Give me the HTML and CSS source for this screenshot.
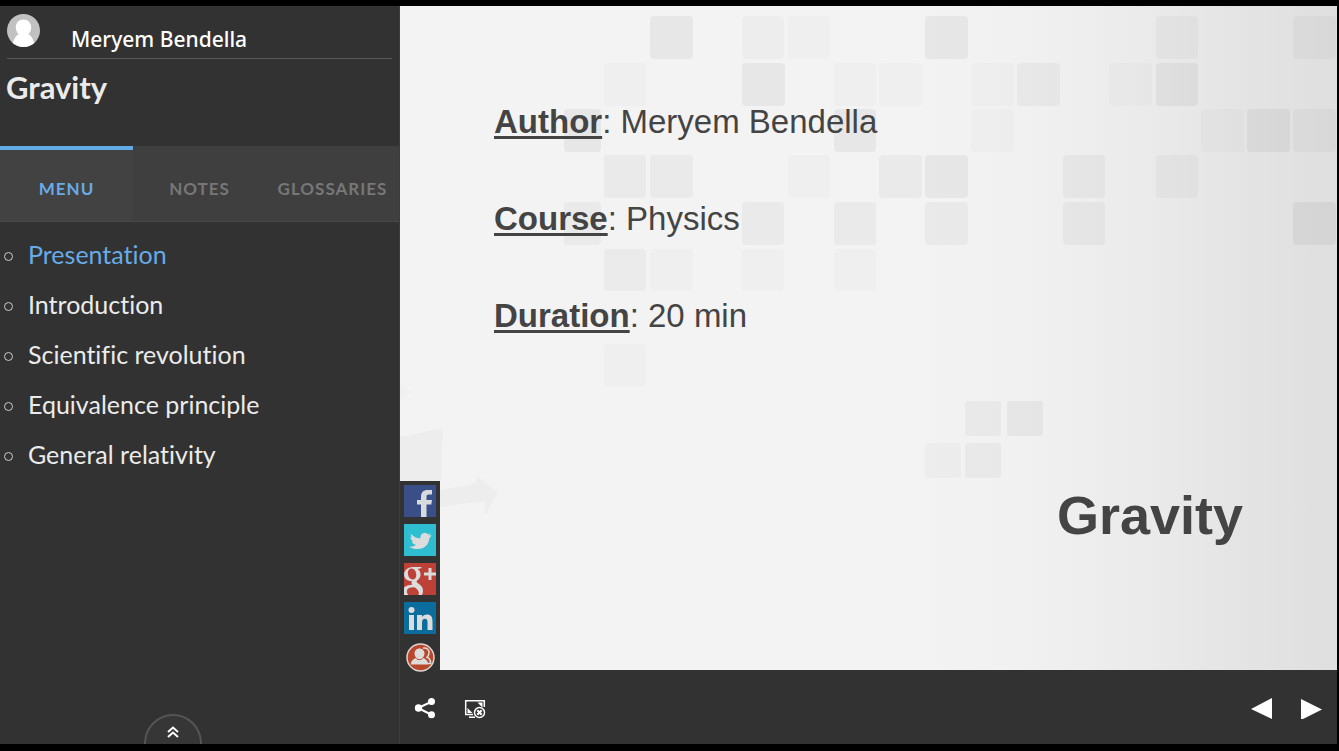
FILE: index.html
```html
<!DOCTYPE html>
<html lang="en">
<head>
<meta charset="utf-8">
<title>Gravity</title>
<link rel="stylesheet" href="styles.css">
</head>
<body>
<div class="player">
  <aside class="sidebar">
    <header class="profile">
      <svg class="avatar" viewBox="0 0 33 33" aria-hidden="true">
        <defs><clipPath id="round"><circle cx="16.500" cy="16.500" r="16.500"/></clipPath></defs>
        <g clip-path="url(#round)">
          <rect width="33" height="33" fill="#c1c1c1"/>
          <path fill="#fff" d="M16.500 5.500c-4.600 0-7.700 3.300-7.700 7.900 0 2.800 1.200 5.200 3 6.700-3 1.500-6 6-6.300 13.400h22c-.3-7.400-3.300-11.900-6.300-13.400 1.800-1.500 3-3.900 3-6.700 0-4.600-3.100-7.900-7.700-7.900z"/>
        </g>
      </svg>
      <span class="profile-name">Meryem Bendella</span>
    </header>
    <h1 class="course-title">Gravity</h1>
    <nav class="tabs">
      <button class="tab tab-active" type="button">MENU</button>
      <button class="tab" type="button">NOTES</button>
      <button class="tab" type="button">GLOSSARIES</button>
    </nav>
    <ul class="outline">
      <li><a class="current" href="#presentation">Presentation</a></li>
      <li><a href="#introduction">Introduction</a></li>
      <li><a href="#revolution">Scientific revolution</a></li>
      <li><a href="#equivalence">Equivalence principle</a></li>
      <li><a href="#relativity">General relativity</a></li>
    </ul>
    <button class="drawer" type="button" aria-label="Expand">
      <svg width="12" height="12" viewBox="0 0 12 12" fill="none" stroke="#fff" stroke-width="2"><path d="M1 6l5-4.500L11 6M1 11l5-4.500L11 11"/></svg>
    </button>
  </aside>

  <main class="stage">
    <section class="slide">
      <svg class="backdrop" viewBox="0 0 937 664" preserveAspectRatio="xMaxYMin slice" aria-hidden="true">
        <g fill="#000">
          <g opacity=".045">
            <rect x="250" y="10" width="43" height="43" rx="4"/>
            <rect x="342" y="57" width="43" height="43" rx="4"/>
            <rect x="525" y="10" width="43" height="43" rx="4"/>
            <rect x="756" y="57" width="42" height="43" rx="4"/>
            <rect x="847" y="103" width="43" height="43" rx="4"/>
            <rect x="893" y="196" width="43" height="43" rx="4"/>
            <rect x="525" y="149" width="43" height="43" rx="4"/>
            <rect x="164" y="103" width="37" height="43" rx="4"/>
            <rect x="434" y="103" width="42" height="43" rx="4"/>
            <rect x="607" y="395" width="36" height="35" rx="3"/>
          </g>
          <g opacity=".032">
            <rect x="204" y="149" width="42" height="43" rx="4"/>
            <rect x="250" y="149" width="43" height="43" rx="4"/>
            <rect x="479" y="149" width="43" height="43" rx="4"/>
            <rect x="617" y="57" width="43" height="43" rx="4"/>
            <rect x="663" y="149" width="42" height="43" rx="4"/>
            <rect x="663" y="196" width="42" height="43" rx="4"/>
            <rect x="204" y="243" width="42" height="42" rx="4"/>
            <rect x="342" y="196" width="42" height="43" rx="4"/>
            <rect x="434" y="196" width="42" height="43" rx="4"/>
            <rect x="525" y="196" width="43" height="43" rx="4"/>
            <rect x="164" y="196" width="37" height="43" rx="4"/>
            <rect x="565" y="395" width="36" height="35" rx="3"/>
            <rect x="565" y="437" width="36" height="35" rx="3"/>
          </g>
          <g opacity=".022">
            <rect x="893" y="10" width="43" height="43" rx="4"/>
            <rect x="893" y="103" width="43" height="43" rx="4"/>
            <rect x="342" y="10" width="42" height="43" rx="4"/>
            <rect x="756" y="10" width="42" height="43" rx="4"/>
            <rect x="756" y="149" width="42" height="43" rx="4"/>
            <rect x="525" y="437" width="36" height="35" rx="3"/>
          </g>
          <g opacity=".024">
            <path d="M0 431l43-9-2 53H0zM40 484l36-7 1-8-6-4 27 21-13 24 0-15-45 6z"/>
          </g>
          <g opacity=".01">
            <rect x="388" y="10" width="42" height="43" rx="4"/>
            <rect x="204" y="57" width="42" height="43" rx="4"/>
            <rect x="434" y="57" width="42" height="43" rx="4"/>
            <rect x="479" y="57" width="43" height="43" rx="4"/>
            <rect x="571" y="57" width="43" height="43" rx="4"/>
            <rect x="709" y="57" width="43" height="43" rx="4"/>
            <rect x="571" y="103" width="43" height="43" rx="4"/>
            <rect x="801" y="103" width="43" height="43" rx="4"/>
            <rect x="388" y="149" width="42" height="43" rx="4"/>
            <rect x="250" y="243" width="43" height="42" rx="4"/>
            <rect x="342" y="243" width="42" height="42" rx="4"/>
            <rect x="434" y="243" width="42" height="42" rx="4"/>
            <rect x="204" y="338" width="42" height="42" rx="4"/>
            <path d="M0 378l12 8-12 8z"/>
          </g>
        </g>
      </svg>
      <div class="facts">
        <p><strong>Author</strong>: Meryem Bendella</p>
        <p><strong>Course</strong>: Physics</p>
        <p><strong>Duration</strong>: 20 min</p>
      </div>
      <h2 class="slide-title">Gravity</h2>
      <div class="share">
        <a href="#facebook" aria-label="Facebook"><svg viewBox="0 0 32 32"><rect width="32" height="32" fill="#3a4f87"/><path fill="#d9dadd" d="M17 32V19.500h-4V15h4v-3c0-4.800 2.200-7 6.800-7H28v4.500h-3c-2 0-2.500.7-2.500 2.500v3H28l-.7 4.500h-4.800V32z"/></svg></a>
        <a href="#twitter" aria-label="Twitter"><svg viewBox="0 0 32 32"><rect width="32" height="32" fill="#2fbdd2"/><path fill="#dcdcdc" d="M7 10c2.500 2.700 5.500 4.200 9.500 4.500-.6-3.300 1.500-5.500 4.200-5.500 1.400 0 2.500.5 3.300 1.400l2.800-1-1.500 2.400 2.600-.5-2.500 2.600C25 20 21 25 13.500 25c-3.200 0-6-.8-8.500-2.300 3 .2 5-.5 6.800-2-2.200-.2-3.600-1.500-4.100-3.100h1.900C7.800 16.800 6.500 15.300 6.500 13l2 .5C6.900 12.300 6.500 11.300 7 10z"/></svg></a>
        <a href="#google-plus" aria-label="Google Plus"><svg viewBox="0 0 32 32"><rect width="32" height="32" fill="#bd4136"/><g fill="#dcdcdc"><path fill-rule="evenodd" d="M9 4h9l-2 1.800h-2.500c2 1.500 3 3.300 3 5.700 0 2.500-1.200 4.200-2.800 5.500-1.500 1.200-1.500 2 .3 3.300 3.700 2.600 5 4.400 5 7.700 0 1.500-.4 2.900-1.200 4h-3.300c1-3-.2-5.500-4.200-7.800-3.900-.2-6.800.8-7.300 3.300-.4 1.900.3 3.400 1.500 4.500H0V24.500c2-1.700 5-2.600 8.300-2.700-.9-1.200-1-2.500-.4-3.800C3.500 18.300 0 15.500 0 11.500 0 7 4.500 4 9 4zM7.500 5.500C4.800 5.700 3.500 8 4 11.300c.5 3.300 2.600 5.500 5 5.200 2.500-.3 3.600-2.600 3.200-5.800-.5-3.200-2.300-5.400-4.700-5.200z"/><path d="M20 9.500h4.500V5h3v4.500H32v3h-4.500V17h-3v-4.500H20z"/></g></svg></a>
        <a href="#linkedin" aria-label="LinkedIn"><svg viewBox="0 0 32 32"><rect width="32" height="32" fill="#0b6c9e"/><g fill="#dcdcdc"><circle cx="7.500" cy="8" r="3"/><path d="M5 13h5v15H5zM13 13h5v2c1-1.600 2.600-2.500 5-2.500 4 0 5.500 2.500 5.500 7V28h-5v-7.500c0-2.500-.7-3.700-2.500-3.700-2 0-3 1.400-3 3.700V28h-5z"/></g></svg></a>
        <a href="#community" aria-label="Community"><svg viewBox="0 0 32 32"><circle cx="16.500" cy="16.500" r="13.500" fill="#b9472b" stroke="#dcd6d2" stroke-width="1.500"/><path fill="none" stroke="#dcdcdc" stroke-width="1.500" d="M19 7.200c4-.8 6.500 2 6 5-.2 1.800-1 3-2 4 2 .8 3.600 2.800 3.700 6.300H24"/><path fill="#dcdcdc" d="M15.500 7.500c-3 0-5 2.200-5 5 0 1.800.8 3.300 2 4.300-3.500 1-5.500 3.200-5.800 6.700h17.600c-.3-3.500-2.300-5.700-5.800-6.700 1.200-1 2-2.500 2-4.300 0-2.800-2-5-5-5z"/><path fill="none" stroke="#b9472b" d="M12.300 17.500c2 1.500 4.400 1.500 6.400 0"/></svg></a>
      </div>
    </section>
    <footer class="toolbar">
      <button type="button" aria-label="Share"><svg width="22" height="22" viewBox="0 0 22 22"><path fill="none" stroke="#fff" stroke-width="2" d="M18 4.500L4 11l14 7"/><g fill="#fff"><circle cx="4.500" cy="11" r="3.700"/><circle cx="17.500" cy="4.500" r="3.500"/><circle cx="17.500" cy="17.700" r="3.500"/></g></svg></button>
      <button type="button" aria-label="Exit full screen"><svg width="22" height="22" viewBox="0 0 22 22"><path fill="none" stroke="#fff" stroke-width="1.500" d="M9 17.500H1.700V3.700h18.600V10M5 20.200h6"/><path fill="#fff" d="M3.500 11l5 5h-5zM13.500 5.500h5v5z"/><circle cx="15.500" cy="15.500" r="5" fill="#323232" stroke="#fff" stroke-width="1.500"/><path stroke="#fff" stroke-width="2" d="M13.300 13.300l4.400 4.400M17.700 13.300l-4.400 4.400"/></svg></button>
      <span class="spacer"></span>
      <button type="button" aria-label="Previous"><svg width="22" height="22" viewBox="0 0 22 22"><path fill="#fff" d="M22 1v21L1 12z"/></svg></button>
      <button type="button" aria-label="Next"><svg width="22" height="22" viewBox="0 0 22 22"><path fill="#fff" d="M1 2l21 10.500L1 23z"/></svg></button>
    </footer>
  </main>
</div>
</body>
</html>
```
FILE: styles.css
```css
* { box-sizing: border-box; }

body {
  margin: 0;
  background: #000;
  font-family: Lato, "Liberation Sans", sans-serif;
}

button {
  margin: 0;
  padding: 0;
  border: 0;
  background: none;
  color: inherit;
  font: inherit;
  cursor: pointer;
}

svg { display: block; }

.player {
  display: grid;
  grid-template-columns: 400px 1fr;
  min-height: 100vh;
  padding: 6px 2px 7px 0;
}

.sidebar {
  display: flex;
  flex-direction: column;
  border-right: 1px solid #3c3c3c;
  background: #323232;
  color: #ebebeb;
}

.profile {
  display: flex;
  height: 53px;
  margin: 0 7px;
  padding-top: 8px;
  border-bottom: 1px solid #5a5a5a;
}

.avatar {
  width: 33px;
  height: 33px;
}

.profile-name {
  margin-left: 31px;
  padding-top: 9px;
  color: #fff;
  font: 500 21px/32px "Noto Sans", "Open Sans", sans-serif;
}

.course-title {
  height: 87px;
  margin: 0;
  padding: 10px 6px;
  font-size: 31px;
  font-weight: 700;
  line-height: 36px;
}

.tabs {
  display: grid;
  grid-template-columns: repeat(3, 1fr);
  height: 76px;
  border-bottom: 1px solid #484848;
  background: #3f3f3f;
}

.tab {
  padding-top: 6px;
  border-top: 4px solid transparent;
  color: #777;
  font-size: 17px;
  font-weight: 700;
  letter-spacing: 1px;
}

.tab-active {
  border-top-color: #62aae8;
  background: #424242;
  color: #67abe8;
}

.outline {
  margin: 0;
  padding: 7px 0 0 4px;
  list-style: none;
  font-size: 25px;
  font-variant-ligatures: none;
  line-height: 50px;
}

.outline li {
  display: flex;
  align-items: center;
  gap: 15px;
}

.outline li::before {
  width: 7px;
  height: 7px;
  margin-top: 5px;
  border: 1px solid #ccc;
  border-radius: 50%;
  content: "";
}

.outline a {
  color: inherit;
  text-decoration: none;
}

.outline .current { color: #67abe8; }

.drawer {
  display: flex;
  justify-content: center;
  width: 58px;
  height: 30px;
  margin: auto 0 0 144px;
  padding-top: 10px;
  border: 2px solid #555;
  border-bottom: 0;
  border-radius: 29px 29px 0 0;
  background: #363636;
}

.stage {
  display: flex;
  flex-direction: column;
  min-width: 0;
}

.slide {
  position: relative;
  display: flex;
  flex: 1;
  flex-direction: column;
  justify-content: space-between;
  background: linear-gradient(90deg, #f3f3f3 55%, #f1f1f1 66%, #ebebeb 79%, #e4e4e4 90%, #dfdfdf);
  color: #444;
  font-family: "Liberation Sans", Arial, sans-serif;
}

.backdrop {
  position: absolute;
  inset: 0;
  width: 100%;
  height: 100%;
}

.facts {
  position: relative;
  display: grid;
  gap: 57px;
  padding: 96px 0 0 94px;
  font-size: 33px;
  line-height: 40px;
}

.facts p { margin: 0; }

.facts strong {
  text-decoration: underline;
  text-decoration-thickness: 3px;
  text-underline-offset: 3px;
  text-decoration-skip-ink: none;
}

.slide-title {
  position: relative;
  margin: 0;
  padding: 0 94px 125px 0;
  font-size: 54px;
  line-height: 60px;
  text-align: right;
}

.share {
  position: absolute;
  bottom: -4px;
  left: 0;
  display: grid;
  gap: 7px;
  padding: 4px;
  padding-bottom: 1px;
  background: #323232;
}

.share a {
  width: 32px;
  height: 32px;
}

.toolbar {
  display: flex;
  align-items: center;
  gap: 28px;
  height: 74px;
  padding: 2px 15px 0 14px;
  background: #323232;
}

.spacer { flex: 1; }
```
